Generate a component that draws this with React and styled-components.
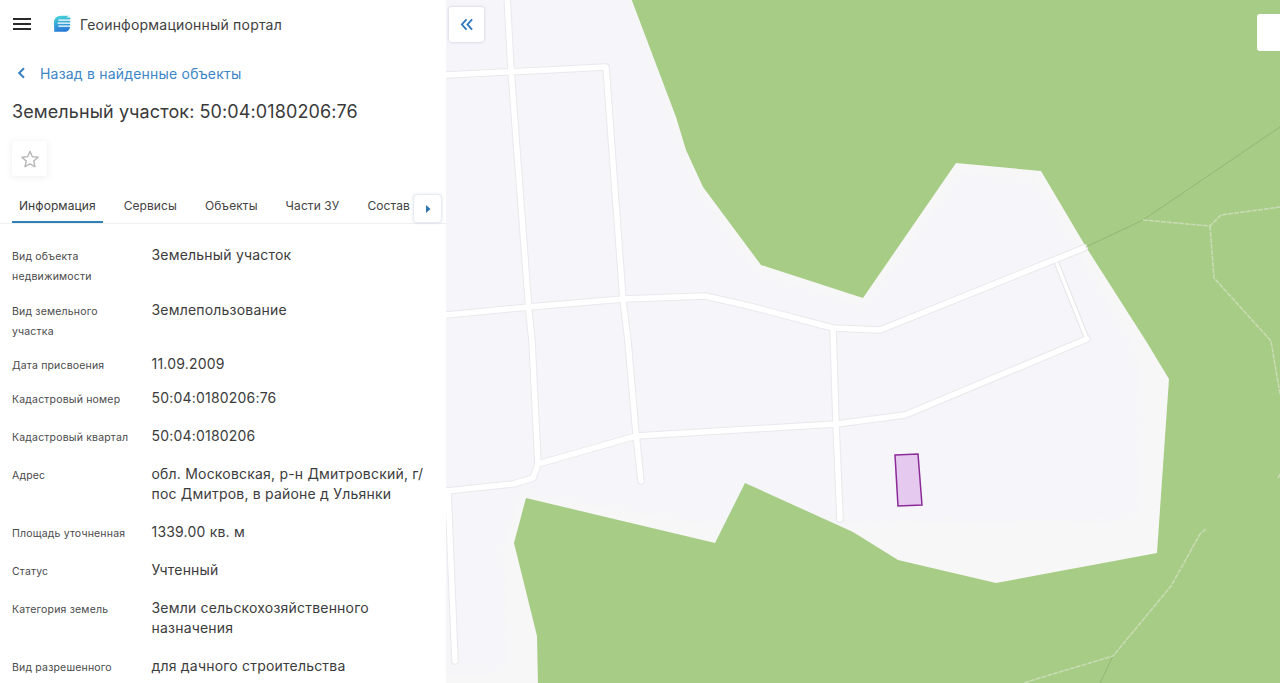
import React from 'react';
import styled, { createGlobalStyle } from 'styled-components';

const Global = createGlobalStyle`
  html, body { margin: 0; padding: 0; height: 100%; overflow: hidden; background: #fff; }
  #root { height: 100%; }
  * { box-sizing: border-box; }
`;
const Page = styled.div`
  display: flex; width: 1280px; height: 683px; overflow: hidden;
  font-family: Inter, "Noto Sans", "Liberation Sans", sans-serif; color: #3b3b3b;
`;
const Panel = styled.aside`
  flex: 0 0 446px; height: 683px; overflow: hidden; background: #fff; display: flex; flex-direction: column;
`;
const Header = styled.header`
  display: flex; align-items: center; height: 48px; padding-left: 13px; flex: none;
`;
const Burger = styled.button`
  display: flex; flex-direction: column; justify-content: space-between; width: 18px; height: 12px;
  padding: 0; border: 0; background: none; margin-right: 22px;
  span { display: block; height: 2px; background: #2b2b2b; }
`;
const Brand = styled.div`
  font-size: 14px; letter-spacing: 0.2px; margin-left: 9px; color: #3f3f3f;
`;
const BackLink = styled.a`
  display: flex; align-items: center; gap: 14px; padding-left: 17px; height: 20px; margin-top: 15px;
  font-size: 14px; letter-spacing: 0.2px; color: #3d86c6; flex: none;
`;
const Title = styled.h1`
  margin: 16px 0 0 12px; font-size: 18px; line-height: 26px; font-weight: 400; letter-spacing: 0.1px; color: #3a3a3a; flex: none;
`;
const StarButton = styled.button`
  width: 35px; height: 35px; margin: 16px 0 0 12px; padding: 0; border: 0; border-radius: 3px; background: #fff;
  box-shadow: 0 1px 6px rgba(60,70,90,.1); display: flex; align-items: center; justify-content: center; flex: none;
`;
const TabBar = styled.nav`
  position: relative; display: flex; align-items: stretch; gap: 14px; height: 48px; padding: 0 37px 0 12px;
  border-bottom: 1px solid #eeeff1; flex: none;
`;
const Tab = styled.div`
  padding: 12px 7px 0; display: flex; align-items: center; font-size: 12px; letter-spacing: 0.08px; white-space: nowrap;
  color: ${p => p.$active ? '#3a3a3a' : '#444'};
  box-shadow: ${p => p.$active ? 'inset 0 -2px 0 #2f80b8' : 'none'};
`;
const TabArrow = styled.button`
  position: absolute; left: 413px; top: 18px; width: 29px; height: 29px; padding: 0; border: 1px solid #e6ecf3;
  border-radius: 4px; background: #fff; box-shadow: 0 0 3px rgba(60,90,130,.15); display: flex; align-items: center; justify-content: center;
`;
const Rows = styled.div`
  padding: 21px 0 0 12px; flex: none;
`;
const Row = styled.div`
  display: flex; padding-bottom: ${p => p.$pb}px;
`;
const Label = styled.div`
  flex: 0 0 139.5px; font-size: 10.5px; line-height: 20px; color: #4a4a4a; letter-spacing: 0.18px; padding-top: 2px; padding-right: 14px;
`;
const Value = styled.div`
  width: 278px; font-size: 14px; line-height: 20px; letter-spacing: 0.2px; color: #3c3c3c;
`;
const MapArea = styled.main`
  position: relative; flex: 1; height: 683px; overflow: hidden; background: #f7f7f7;
`;
const MapSvg = styled.svg`
  display: block; width: 834px; height: 683px;
`;
const CollapseButton = styled.button`
  position: absolute; left: 3px; top: 7px; width: 35px; height: 35px; padding: 0; border: 0; border-radius: 3px; background: #fff;
  box-shadow: 0 0 3px rgba(60,80,120,.28); display: flex; align-items: center; justify-content: center;
`;
const CornerButton = styled.div`
  position: absolute; left: 811px; top: 14px; width: 40px; height: 37px; border-radius: 3px; background: #fff;
`;

const rows = [
  ['Вид объекта недвижимости', 'Земельный участок', 13],
  ['Вид земельного участка', 'Землепользование', 12],
  ['Дата присвоения', '11.09.2009', 12],
  ['Кадастровый номер', '50:04:0180206:76', 16],
  ['Кадастровый квартал', '50:04:0180206', 16],
  ['Адрес', 'обл. Московская, р-н Дмитровский, г/пос Дмитров, в районе д Ульянки', 18],
  ['Площадь уточненная', '1339.00 кв. м', 16],
  ['Статус', 'Учтенный', 16],
  ['Категория земель', 'Земли сельскохозяйственного назначения', 18],
  ['Вид разрешенного использования', 'для дачного строительства', 18],
];
const tabs = ['Информация', 'Сервисы', 'Объекты', 'Части ЗУ', 'Состав'];

const roads = [
  'M507 -5 L511 70 L529 312 L532 341 L538 464 L533 478 L513 484 L446 491',
  'M446 75 L606 67 L623 300 L628 341 L636 434 L641 481',
  'M446 315 L529 307 L623 299 L705 296 L749 306 L833 328 L880 330 L1084 248',
  'M833 328 L836 424 L840 519',
  'M538 464 L636 436 L836 424 L905 415 L1087 339',
  'M448 491 L455 661',
];
const trails = [
  'M1143 220 L1210 226 L1221 215 L1280 207',
  'M1210 226 L1214 278 L1271 341 L1280 394',
  'M1206 529 L1200 534 L1171 586 L1113 656 L1023 683',
  'M1278 478 L1281 473',
];
const forest = '631,-2 676,117 686,150 703,187 761,265 863,298 956,163 1041,171 1086,247 1146,341 1169,379 1157,553 996,583 898,560 853,532 745,483 715,543 526,498 514,543 537,636 538,685 1282,685 1282,-2';
const lane = 'M1087 339 L1057 264';

export default function App() {
  return (
    <Page>
      <Global />
      <Panel>
        <Header>
          <Burger aria-label="Меню"><span /><span /><span /></Burger>
          <svg width="18" height="18" viewBox="0 0 18 18">
            <defs>
              <linearGradient id="logo" x1="0.3" y1="0" x2="0.5" y2="1">
                <stop offset="0" stopColor="#45d2d6" />
                <stop offset="1" stopColor="#2878d8" />
              </linearGradient>
            </defs>
            <path d="M8 .8H17C14.5 1.5 13.5 2 13.5 2.6H17.4C17 8 17.4 12 16.8 13.2C15.8 16 14 16.8 11.5 16.8H1.2C1.6 13 .6 10 1 7C1.6 3 4 .9 8 .8Z" fill="url(#logo)" />
            <path d="M5.4 5.2H18M4.6 8.2H18M5.4 11.2H18" stroke="#fff" strokeWidth="1.2" />
          </svg>
          <Brand>Геоинформационный портал</Brand>
        </Header>
        <BackLink>
          <svg width="9" height="12" viewBox="0 0 9 12"><path d="M7 1.2 2.2 6 7 10.8" fill="none" stroke="#3a80c0" strokeWidth="2" /></svg>
          Назад в найденные объекты
        </BackLink>
        <Title>Земельный участок: 50:04:0180206:76</Title>
        <StarButton aria-label="В избранное">
          <svg width="20" height="20" viewBox="0 0 24 24"><path d="M12 2.8 14.8 9.2 21.7 9.9 16.5 14.5 18 21.3 12 17.8 6 21.3 7.5 14.5 2.3 9.9 9.2 9.2Z" fill="none" stroke="#b4b4b4" strokeWidth="1.6" strokeLinejoin="round" /></svg>
        </StarButton>
        <TabBar>
          {tabs.map((t, i) => <Tab key={t} $active={i === 0}>{t}</Tab>)}
          <TabArrow aria-label="Дальше">
            <svg width="6" height="8" viewBox="0 0 6 8"><path d="M1 0 5.5 4 1 8Z" fill="#2f74ae" /></svg>
          </TabArrow>
        </TabBar>
        <Rows>
          {rows.map(([l, v, pb]) => (
            <Row key={l} $pb={pb}>
              <Label>{l}</Label>
              <Value>{v}</Value>
            </Row>
          ))}
        </Rows>
      </Panel>
      <MapArea>
        <MapSvg viewBox="446 0 834 683">
          <defs>
            <filter id="soft" x="-5%" y="-5%" width="110%" height="110%"><feGaussianBlur stdDeviation="7" /></filter>
          </defs>
          <polygon filter="url(#soft)" points="430,-20 625,-20 670,120 695,190 755,275 865,310 962,175 1034,182 1130,345 1140,400 1135,518 840,520 730,525 520,490 500,545 505,670 430,670" fill="#f5f5fa" />
          <polygon points={forest} fill="#a7cc85" />
          <path d={lane} fill="none" stroke="#e4e4e8" strokeWidth="5.5" strokeLinecap="round" />
          {roads.map(d => <path key={d} d={d} fill="none" stroke="#e9e9ed" strokeWidth="7.5" strokeLinejoin="round" strokeLinecap="round" />)}
          <path d={lane} fill="none" stroke="#fff" strokeWidth="3.5" strokeLinecap="round" />
          {roads.map(d => <path key={d + 'w'} d={d} fill="none" stroke="#fff" strokeWidth="5.5" strokeLinejoin="round" strokeLinecap="round" />)}
          <path d="M1086 247 L1143 220 L1280 127 M1113 656 L1100 683" fill="none" stroke="#8fb071" strokeWidth="0.8" />
          {trails.map(d => <path key={d} d={d} fill="none" stroke="#c8dcb4" strokeWidth="1.6" strokeDasharray="5 1" />)}
          <polygon points="895,455 918,454 922,505 898,506" fill="#e5c9ee" stroke="#8c2a98" strokeWidth="1.5" />
        </MapSvg>
        <CollapseButton aria-label="Свернуть">
          <svg width="14" height="13" viewBox="0 0 14 14"><path d="M6.5 1.5 1.5 7 6.5 12.5M12.5 1.5 7.5 7 12.5 12.5" fill="none" stroke="#2f78bd" strokeWidth="2" /></svg>
        </CollapseButton>
        <CornerButton />
      </MapArea>
    </Page>
  );
}
